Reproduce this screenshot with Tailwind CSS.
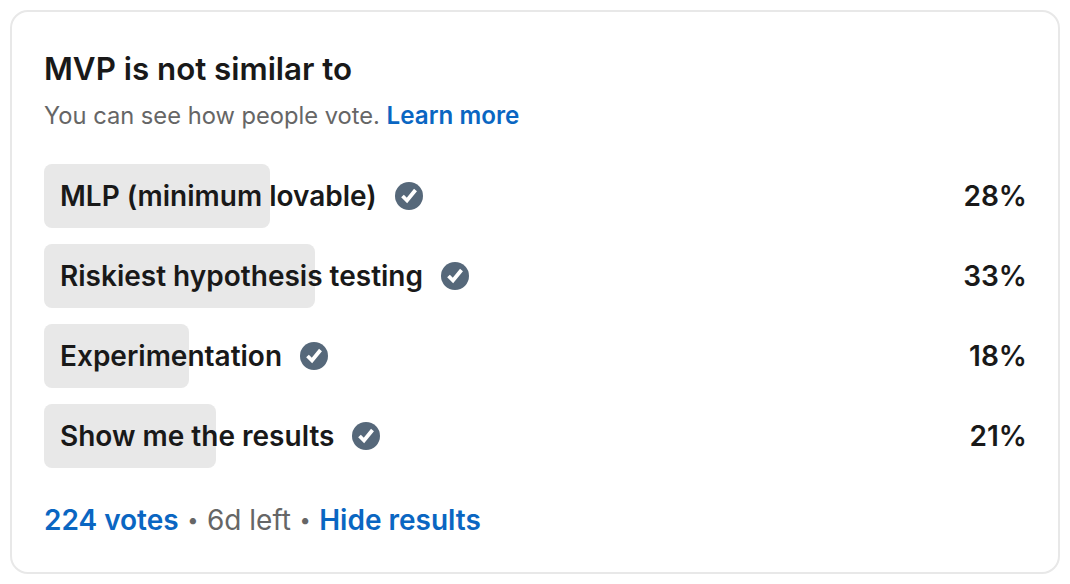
<!DOCTYPE html>
<html lang="en">
<head>
    <meta charset="UTF-8">
    <title>Poll</title>
    <script src="https://cdn.jsdelivr.net/npm/@tailwindcss/browser@4"></script>
</head>
<body class="bg-white font-['Inter',sans-serif] text-[#191919] w-[1070px] h-[584px] overflow-hidden">
    <div class="ml-[10px] mt-[10px] w-[1050px] h-[564px] border-2 border-[#e8e8e8] rounded-[18px] pt-[37px] pl-[32px] pr-[31px]">
        <h1 class="text-[31.3px] leading-[40px] font-semibold">MVP is not similar to</h1>
        <p class="mt-[11px] text-[23.7px] leading-[32px] text-[#666666]">You can see how people vote. <a class="text-[24.2px] text-[#0a66c2] font-semibold">Learn more</a></p>

        <div class="mt-[32px] flex flex-col gap-[16px]">
            <div class="relative h-[64px] flex items-center justify-between pl-[16px] text-[28px] font-semibold">
                <div class="absolute left-0 top-0 h-full w-[226px] bg-[#e8e8e8] rounded-[8px]"></div>
                <div class="relative flex items-center gap-[18px]">
                    <span>MLP (minimum lovable)</span>
                    <svg class="w-[28px] h-[28px]" viewBox="0 0 28 28"><circle cx="14" cy="14" r="14" fill="#56687a"/><path d="M7.5 14l4.5 4.5 8.5-10.5" fill="none" stroke="#fff" stroke-width="3.8"/></svg>
                </div>
                <span class="relative">28%</span>
            </div>
            <div class="relative h-[64px] flex items-center justify-between pl-[16px] text-[28px] font-semibold">
                <div class="absolute left-0 top-0 h-full w-[271px] bg-[#e8e8e8] rounded-[8px]"></div>
                <div class="relative flex items-center gap-[18px]">
                    <span>Riskiest hypothesis testing</span>
                    <svg class="w-[28px] h-[28px]" viewBox="0 0 28 28"><circle cx="14" cy="14" r="14" fill="#56687a"/><path d="M7.5 14l4.5 4.5 8.5-10.5" fill="none" stroke="#fff" stroke-width="3.8"/></svg>
                </div>
                <span class="relative">33%</span>
            </div>
            <div class="relative h-[64px] flex items-center justify-between pl-[16px] text-[28px] font-semibold">
                <div class="absolute left-0 top-0 h-full w-[145px] bg-[#e8e8e8] rounded-[8px]"></div>
                <div class="relative flex items-center gap-[18px]">
                    <span>Experimentation</span>
                    <svg class="w-[28px] h-[28px]" viewBox="0 0 28 28"><circle cx="14" cy="14" r="14" fill="#56687a"/><path d="M7.5 14l4.5 4.5 8.5-10.5" fill="none" stroke="#fff" stroke-width="3.8"/></svg>
                </div>
                <span class="relative">18%</span>
            </div>
            <div class="relative h-[64px] flex items-center justify-between pl-[16px] text-[28px] font-semibold">
                <div class="absolute left-0 top-0 h-full w-[172px] bg-[#e8e8e8] rounded-[8px]"></div>
                <div class="relative flex items-center gap-[18px]">
                    <span>Show me the results</span>
                    <svg class="w-[28px] h-[28px]" viewBox="0 0 28 28"><circle cx="14" cy="14" r="14" fill="#56687a"/><path d="M7.5 14l4.5 4.5 8.5-10.5" fill="none" stroke="#fff" stroke-width="3.8"/></svg>
                </div>
                <span class="relative">21%</span>
            </div>
        </div>

        <div class="mt-[32px] flex items-center text-[28px] leading-[40px] text-[#666666]">
            <a class="text-[#0a66c2] font-semibold">224 votes</a>
            <span class="mx-[8.5px] text-[20px]">•</span>
            <span>6d left</span>
            <span class="mx-[8.5px] text-[20px]">•</span>
            <a class="text-[#0a66c2] font-semibold">Hide results</a>
        </div>
    </div>
</body>
</html>
